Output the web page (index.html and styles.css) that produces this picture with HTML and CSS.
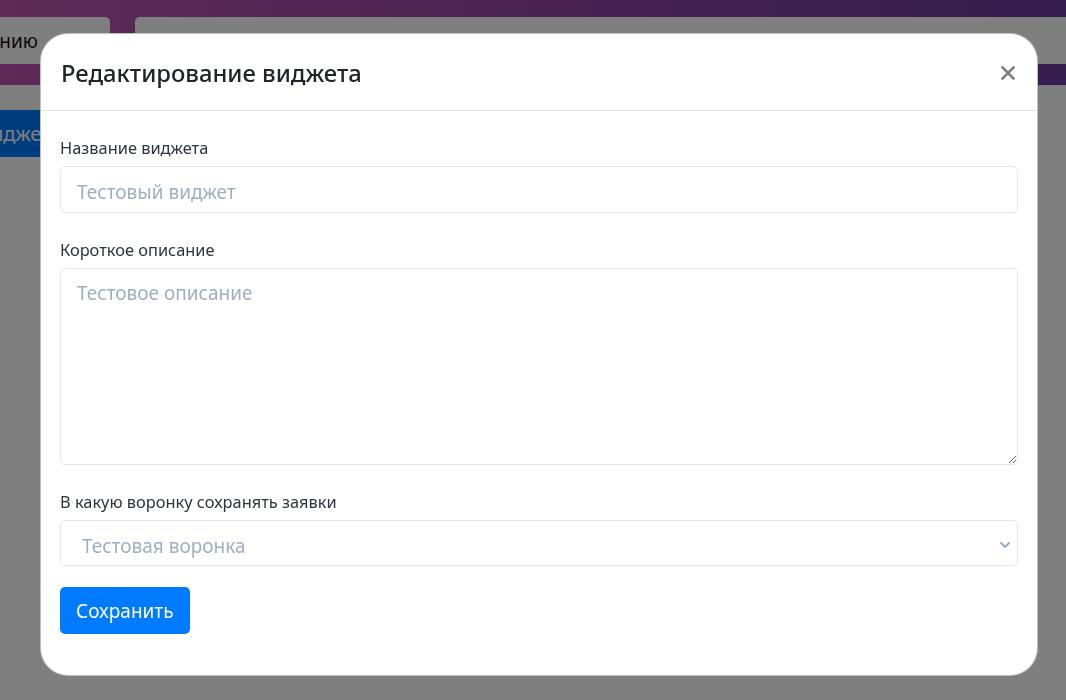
FILE: index.html
```html
<!DOCTYPE html>
<html lang="ru">
<head>
<meta charset="utf-8">
<title>Редактирование виджета</title>
<link rel="stylesheet" href="styles.css">
</head>
<body>
<div class="page">
  <header class="topbar">
    <div class="tabs">
      <div class="tab tab-left">Настройки по умолчанию</div>
      <div class="tab tab-right"></div>
    </div>
  </header>
  <main class="content">
    <button class="add-btn" type="button">Добавить виджет</button>
  </main>
</div>
<div class="backdrop"></div>
<div class="modal-layer">
  <div class="modal">
    <div class="modal-header">
      <h4 class="modal-title">Редактирование виджета</h4>
      <button class="close" type="button" aria-label="Закрыть">
        <svg width="14" height="14" viewBox="0 0 14 14"><path d="M1.5 1.5 L12.5 12.5 M12.5 1.5 L1.5 12.5" stroke="#7f7f7f" stroke-width="2.6" stroke-linecap="square" fill="none"/></svg>
      </button>
    </div>
    <form class="modal-body">
      <div class="field">
        <label class="label">Название виджета</label>
        <input class="control" type="text" placeholder="Тестовый виджет">
      </div>
      <div class="field">
        <label class="label">Короткое описание</label>
        <textarea class="control area" rows="6" placeholder="Тестовое описание"></textarea>
      </div>
      <div class="field">
        <label class="label">В какую воронку сохранять заявки</label>
        <div class="select-wrap">
          <select class="control select">
            <option>Тестовая воронка</option>
          </select>
          <svg class="chevron" width="12" height="8" viewBox="0 0 12 8"><path d="M1.5 1.5 L6 6 L10.5 1.5" stroke="#95a3b8" stroke-width="1.8" fill="none"/></svg>
        </div>
      </div>
      <div class="actions">
        <button class="save-btn" type="button">Сохранить</button>
      </div>
    </form>
  </div>
</div>
</body>
</html>
```

FILE: styles.css
```css
* { box-sizing: border-box; }
html, body { margin: 0; padding: 0; }
body {
  font-family: "Noto Sans", "Open Sans", sans-serif;
  background: #ffffff;
  color: #212529;
  width: 1066px;
  height: 700px;
  overflow: hidden;
}
.page { width: 1066px; }
.topbar {
  height: 85px;
  padding-top: 17px;
  background: linear-gradient(90deg, #bd56b0 0%, #8c42a2 60%, #6a3a9a 100%);
  overflow: hidden;
}
.tabs {
  display: flex;
  gap: 25px;
  margin-left: -200px;
  margin-right: -20px;
}
.tab {
  height: 47px;
  background: #ffffff;
  border-radius: 5px;
}
.tab-left {
  width: 310px;
  flex: none;
  font-size: 19px;
  color: #111;
  display: flex;
  align-items: center;
  justify-content: flex-end;
  padding-right: 72px;
  white-space: nowrap;
}
.tab-right { flex: 1; }
.content { padding-top: 25px; }
.add-btn {
  margin-left: -139px;
  height: 47px;
  padding: 0 20px;
  border: none;
  border-radius: 5px;
  background: #007bff;
  color: #fff;
  font-family: inherit;
  font-size: 20px;
}
.backdrop {
  position: fixed;
  inset: 0;
  background: rgba(0, 0, 0, 0.5);
}
.modal-layer {
  position: fixed;
  inset: 0;
  padding: 33px 0 0 40px;
}
.modal {
  width: 998px;
  height: 643px;
  background: #fff;
  border: 1px solid rgba(0, 0, 0, 0.25);
  border-radius: 28px;
  overflow: hidden;
}
.modal-header {
  height: 77px;
  border-bottom: 1px solid #dee2e6;
  display: flex;
  align-items: center;
  justify-content: space-between;
  padding: 2px 22px 0 20px;
}
.modal-title {
  margin: 0;
  font-size: 23.8px;
  font-weight: 500;
  color: #212529;
  line-height: 1.2;
}
.close {
  border: none;
  background: none;
  padding: 0;
  width: 14px;
  height: 14px;
  display: flex;
}
.modal-body {
  display: flex;
  flex-direction: column;
  padding: 25px 19px 0 19px;
}
.field {
  display: flex;
  flex-direction: column;
  gap: 6px;
  margin-bottom: 25px;
}
.label {
  font-size: 16.4px;
  line-height: 24px;
  color: #2d3340;
}
.control {
  display: block;
  width: 100%;
  height: 47px;
  padding: 5px 16px 0;
  border: 1px solid #e2e8f0;
  border-radius: 5px;
  background: #fff;
  font-family: inherit;
  font-size: 19px;
  color: #495057;
  outline: none;
}
.control::placeholder { color: #a0aec0; }
.area {
  height: 197px;
  padding: 9px 16px;
  resize: vertical;
  line-height: 30px;
}
.select-wrap { position: relative; }
.select {
  appearance: none;
  -webkit-appearance: none;
  padding-left: 21px;
  color: #a0aec0;
  height: 46px;
}
.chevron {
  position: absolute;
  right: 7px;
  top: 21px;
}
.actions { margin-top: -4px; }
.save-btn {
  height: 47px;
  padding: 1px 16px 0;
  border: none;
  border-radius: 5px;
  background: #007bff;
  color: #fff;
  font-family: inherit;
  font-size: 19px;
}
```
